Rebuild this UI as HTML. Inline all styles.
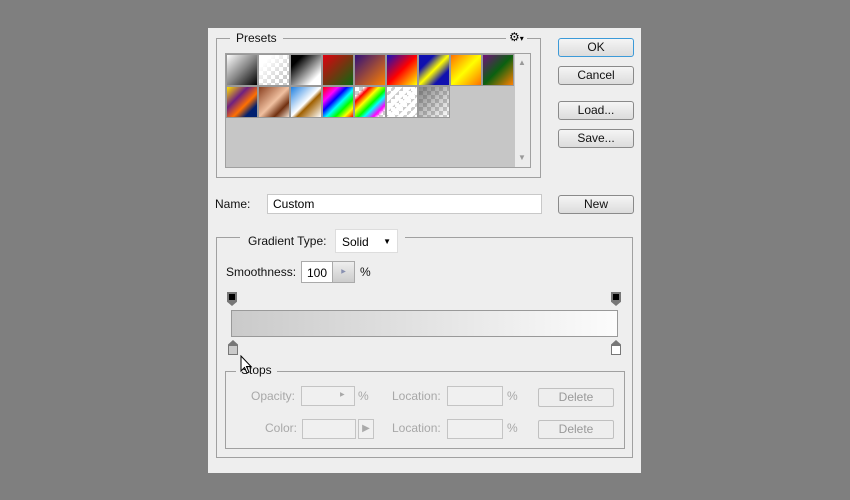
<!DOCTYPE html><html><head><style>
*{box-sizing:border-box}body{margin:0;width:850px;height:500px;background:#7f7f7f;font-family:"Liberation Sans",sans-serif;font-size:12px;position:relative;overflow:hidden}
.a{position:absolute}
.dlg{left:208px;top:28px;width:433px;height:445px;background:#eeeeee}
.fs{border:1px solid #a0a0a0}
.btn{width:76px;height:19px;border:1px solid #8a8a8a;border-radius:3px;background:linear-gradient(#f5f5f5,#dcdcdc);text-align:center;line-height:17px;color:#111}
.lbl{color:#111}
.dis{color:#a8a8a8}
.box{background:#f0f0f0;border:1px solid #c4c4c4}
.sw{position:absolute;width:32px;height:32px;border:1px solid #999}
.ck{background-color:#fff;background-image:linear-gradient(45deg,#ccc 25%,transparent 25%,transparent 75%,#ccc 75%),linear-gradient(45deg,#ccc 25%,transparent 25%,transparent 75%,#ccc 75%);background-size:8px 8px;background-position:0 0,4px 4px}
</style></head><body>
<div class="a dlg"></div>
<div class="a fs" style="left:216px;top:38px;width:325px;height:140px"></div>
<div class="a lbl" style="left:230px;top:31px;background:#eee;padding:0 6px;font-size:12px">Presets</div>
<div class="a" style="left:506px;top:30px;background:#eee;padding:0 3px;font-size:12px">⚙<span style="font-size:8px">▾</span></div>
<div class="a" style="left:225px;top:53px;width:306px;height:115px;background:#c6c6c6;border:1px solid #a0a0a0"></div>
<div class="a" style="left:515px;top:54px;width:15px;height:113px;background:#ececec"></div>
<div class="a" style="left:518px;top:58px;font-size:8px;color:#999">▲</div>
<div class="a" style="left:518px;top:153px;font-size:8px;color:#999">▼</div>
<div class="sw" style="left:226px;top:54px;background:linear-gradient(135deg,#fff,#888 50%,#000)"></div>
<div class="sw ck" style="left:258px;top:54px"><div style="width:100%;height:100%;background:linear-gradient(135deg,#fff 20%,rgba(255,255,255,0) 80%)"></div></div>
<div class="sw" style="left:290px;top:54px;background:linear-gradient(135deg,#000 20%,#fff 80%)"></div>
<div class="sw" style="left:322px;top:54px;background:linear-gradient(135deg,#e00010,#0a6a10)"></div>
<div class="sw" style="left:354px;top:54px;background:linear-gradient(135deg,#30107a,#ff8000)"></div>
<div class="sw" style="left:386px;top:54px;background:linear-gradient(135deg,#1010c0,#f00 50%,#ff0)"></div>
<div class="sw" style="left:418px;top:54px;background:linear-gradient(135deg,#1010b0 25%,#ff0 50%,#1010b0 75%)"></div>
<div class="sw" style="left:450px;top:54px;background:linear-gradient(135deg,#ff7000,#ff0 50%,#ff7000)"></div>
<div class="sw" style="left:482px;top:54px;background:linear-gradient(135deg,#70107a,#0a6010 50%,#ff8000)"></div>
<div class="sw" style="left:226px;top:86px;background:linear-gradient(135deg,#ffe000,#702080 35%,#ff7000 60%,#002070 80%)"></div>
<div class="sw" style="left:258px;top:86px;background:linear-gradient(135deg,#8a4020,#f0c0a0 50%,#703010 75%,#f0e0d0)"></div>
<div class="sw" style="left:290px;top:86px;background:linear-gradient(135deg,#2080e0,#fff 50%,#a06000 60%,#fff)"></div>
<div class="sw" style="left:322px;top:86px;background:linear-gradient(135deg,#f00,#f0f 25%,#00f 40%,#0ff 55%,#0f0 70%,#ff0 85%,#f00)"></div>
<div class="sw ck" style="left:354px;top:86px"><div style="width:100%;height:100%;background:linear-gradient(135deg,transparent 15%,#f00 25%,#ff0 40%,#0f0 55%,#0ff 65%,#f0f 80%,transparent 90%)"></div></div>
<div class="sw ck" style="left:386px;top:86px"><div style="width:100%;height:100%;background:repeating-linear-gradient(135deg,#fff 0 4px,transparent 4px 7px)"></div></div>
<div class="sw ck" style="left:418px;top:86px"><div style="width:100%;height:100%;background:linear-gradient(135deg,rgba(80,80,80,.7),transparent)"></div></div>
<div class="a btn" style="left:558px;top:38px;border-color:#3c9ad8">OK</div>
<div class="a btn" style="left:558px;top:66px">Cancel</div>
<div class="a btn" style="left:558px;top:101px">Load...</div>
<div class="a btn" style="left:558px;top:129px">Save...</div>
<div class="a btn" style="left:558px;top:195px">New</div>
<div class="a lbl" style="left:215px;top:197px">Name:</div>
<div class="a" style="left:267px;top:194px;width:275px;height:20px;background:#fff;border:1px solid #c8c8c8;padding:2px 5px">Custom</div>
<div class="a fs" style="left:216px;top:237px;width:417px;height:221px"></div>
<div class="a" style="left:240px;top:230px;width:165px;height:20px;background:#eee"></div>
<div class="a lbl" style="left:248px;top:234px">Gradient Type:</div>
<div class="a" style="left:335px;top:229px;width:63px;height:24px;background:#fff;border:1px solid #ddd;padding:5px 6px">Solid<span style="position:absolute;right:6px;top:7px;font-size:8px">▼</span></div>
<div class="a lbl" style="left:226px;top:265px">Smoothness:</div>
<div class="a" style="left:301px;top:261px;width:54px;height:22px;background:#fff;border:1px solid #aaa;padding:4px 5px">100</div>
<div class="a" style="left:332px;top:262px;width:22px;height:20px;background:linear-gradient(#eee,#ccc);border-left:1px solid #aaa;font-size:6px;color:#8890b0;text-align:center;line-height:20px">▶</div>
<div class="a lbl" style="left:360px;top:265px">%</div>
<div class="a" style="left:227px;top:292px;width:10px;height:14px;background:#777;clip-path:polygon(0 0,100% 0,100% 70%,50% 100%,0 70%)"><div style="margin:2px;width:6px;height:6px;background:#000"></div></div>
<div class="a" style="left:611px;top:292px;width:10px;height:14px;background:#777;clip-path:polygon(0 0,100% 0,100% 70%,50% 100%,0 70%)"><div style="margin:2px;width:6px;height:6px;background:#000"></div></div>
<div class="a" style="left:231px;top:310px;width:387px;height:27px;border:1px solid #999;background:linear-gradient(90deg,#cacaca,#fcfcfc)"></div>
<div class="a" style="left:228px;top:340px;width:10px;height:15px;background:#777;clip-path:polygon(50% 0,100% 30%,100% 100%,0 100%,0 30%)"><div style="margin:6px 1px 0;width:8px;height:8px;background:#cacaca"></div></div>
<div class="a" style="left:611px;top:340px;width:10px;height:15px;background:#777;clip-path:polygon(50% 0,100% 30%,100% 100%,0 100%,0 30%)"><div style="margin:6px 1px 0;width:8px;height:8px;background:#fff"></div></div>
<div class="a fs" style="left:225px;top:371px;width:400px;height:78px"></div>
<div class="a lbl" style="left:236px;top:363px;background:#eee;padding:0 5px">Stops</div>
<svg class="a" style="left:240px;top:355px" width="14" height="20"><path d="M1 1V16L4.5 12.5L7 18L9 17L6.5 11.5H11Z" fill="#fff" stroke="#000"/></svg>
<div class="a dis" style="left:251px;top:389px">Opacity:</div>
<div class="a box" style="left:301px;top:386px;width:54px;height:20px"></div>
<div class="a dis" style="left:340px;top:391px;font-size:6px">▶</div>
<div class="a dis" style="left:358px;top:389px">%</div>
<div class="a dis" style="left:392px;top:389px">Location:</div>
<div class="a box" style="left:447px;top:386px;width:56px;height:20px"></div>
<div class="a dis" style="left:507px;top:389px">%</div>
<div class="a" style="left:538px;top:388px;width:76px;height:19px;border:1px solid #c0c0c0;border-radius:2px;text-align:center;line-height:17px;color:#999">Delete</div>
<div class="a dis" style="left:265px;top:421px">Color:</div>
<div class="a box" style="left:302px;top:419px;width:54px;height:20px"></div>
<div class="a box" style="left:358px;top:419px;width:16px;height:20px;color:#aaa;font-size:10px;text-align:center;line-height:18px">▶</div>
<div class="a dis" style="left:392px;top:421px">Location:</div>
<div class="a box" style="left:447px;top:419px;width:56px;height:20px"></div>
<div class="a dis" style="left:507px;top:421px">%</div>
<div class="a" style="left:538px;top:420px;width:76px;height:19px;border:1px solid #c0c0c0;border-radius:2px;text-align:center;line-height:17px;color:#999">Delete</div>
</body></html>
